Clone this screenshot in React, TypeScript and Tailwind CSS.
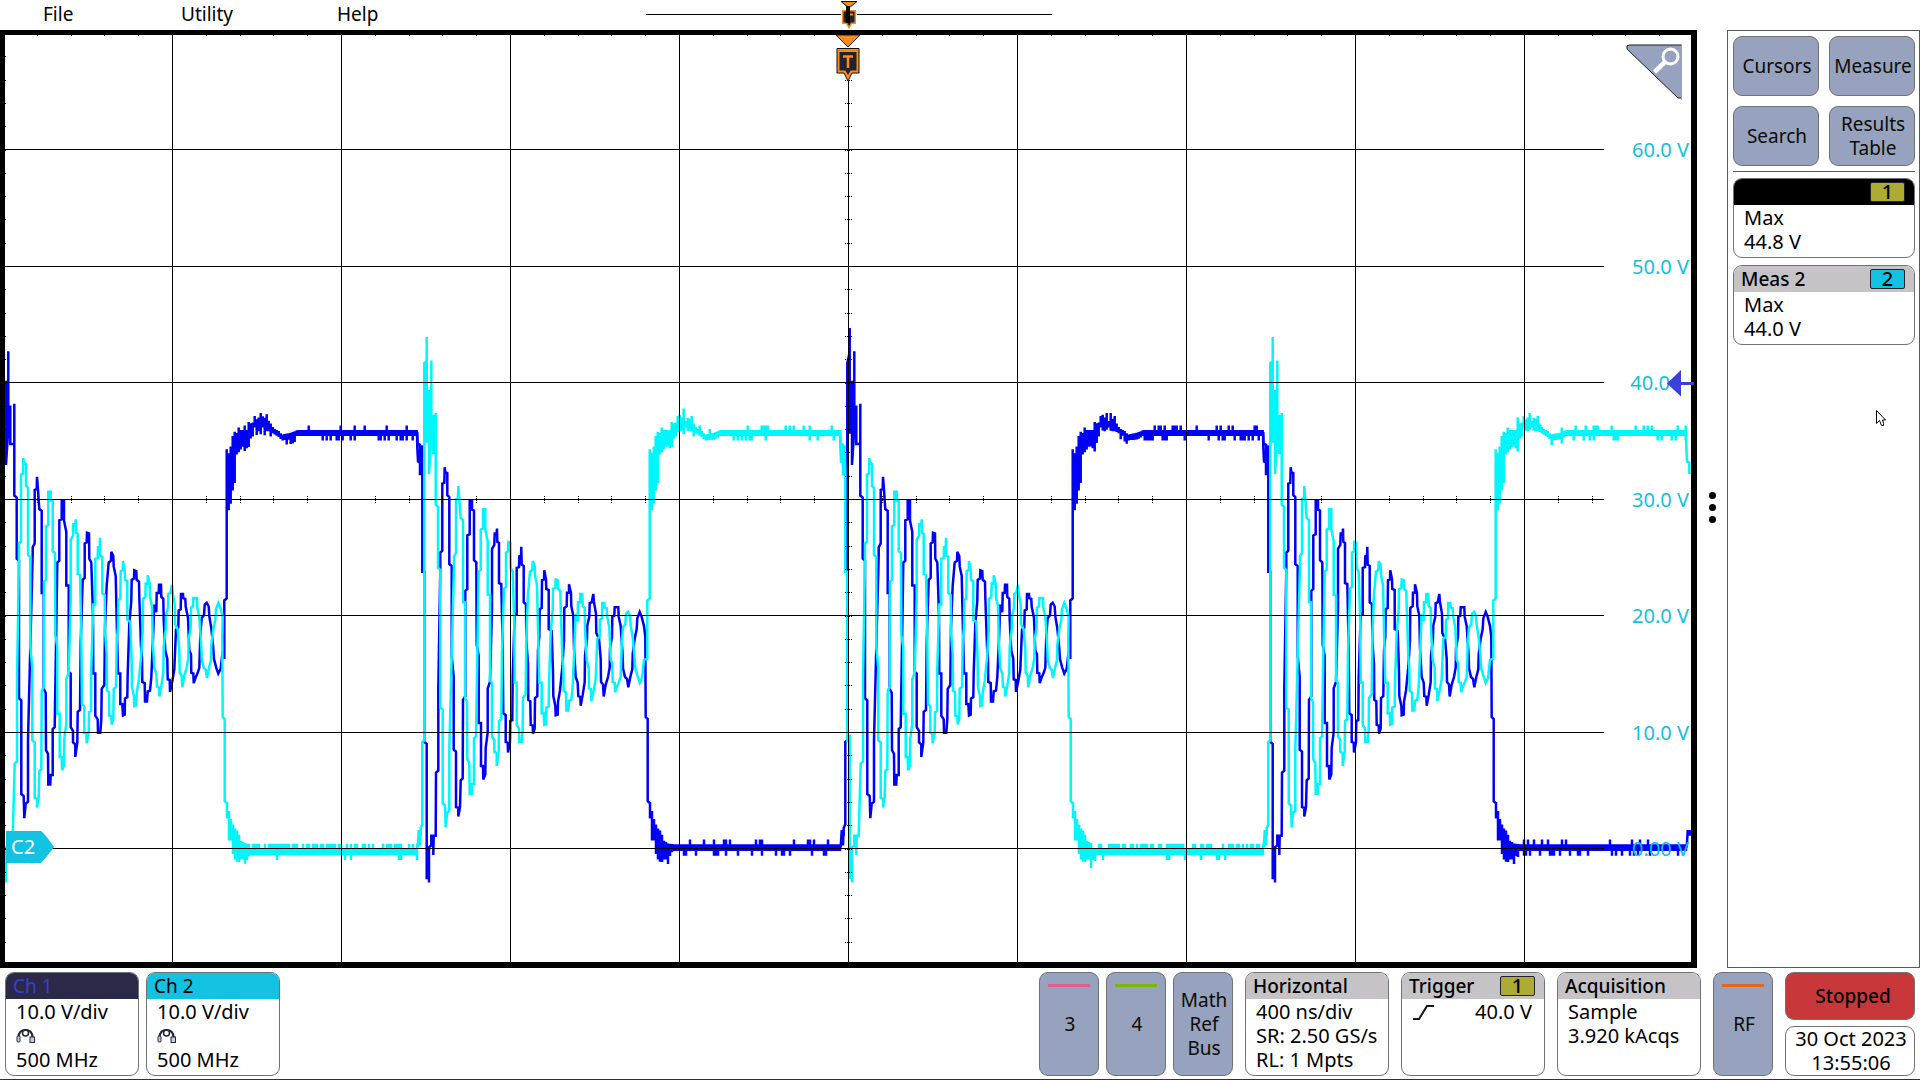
import React from "react";
import clsx from "clsx";

type Point = [number, number];

const HIGH_RING: Point[] = [
  [60, 1425], [62, 1380], [67, 1370], [67, 1155], [73, 1150], [73, 165], [80, 160], [80, 97], [80, 370], [87, 370],
  [87, 235], [87, 455], [94, 360], [94, 158], [94, 360], [100, 360], [100, 300], [100, 400], [107, 400], [107, 295],
  [107, 535], [114, 540], [114, 700], [121, 705], [121, 1065], [128, 1070], [128, 1315], [135, 1320], [137, 1378],
  [141, 1340], [148, 1335], [148, 1175], [155, 930], [162, 690], [162, 670], [168, 660], [168, 520], [174, 518],
  [175, 486], [178, 520], [182, 570], [189, 575], [189, 790], [195, 790], [195, 1040], [201, 1050], [202, 1200],
  [208, 1210], [209, 1290], [215, 1290], [216, 1265], [222, 1265], [222, 1145], [228, 1140], [232, 930], [236, 710],
  [242, 705], [242, 600], [249, 597], [249, 547], [256, 547], [256, 600], [263, 630], [263, 770], [270, 770],
  [270, 995], [276, 1000], [276, 1140], [283, 1150], [283, 1180], [290, 1185], [290, 1218], [296, 1180], [297, 1100],
  [304, 1095], [306, 920], [312, 755], [318, 750], [318, 660], [324, 657], [325, 632], [331, 634], [332, 700],
  [338, 710], [343, 850], [344, 1000], [350, 1000], [350, 1110], [357, 1120], [358, 1155], [365, 1155], [368, 1120],
  [369, 1040], [377, 1030], [379, 880], [384, 770], [390, 710], [397, 705], [398, 682], [404, 693], [405, 720],
  [411, 745], [414, 860], [418, 1000], [425, 1000], [425, 1080], [431, 1080], [433, 1110], [438, 1108], [439, 1065],
  [446, 1062], [447, 1000], [452, 870], [458, 810], [459, 755], [466, 752], [467, 730], [473, 732], [474, 755],
  [481, 760], [482, 800], [487, 930], [490, 960], [491, 1022], [498, 1025], [499, 1073], [505, 1073], [507, 1047],
  [514, 1045], [518, 1010], [523, 910], [527, 820], [533, 840], [534, 790], [540, 790], [541, 768], [547, 768],
  [548, 800], [554, 805], [555, 860], [560, 940], [566, 962], [567, 1015], [573, 1017], [574, 1048], [581, 1020],
  [587, 990], [592, 885], [599, 880], [600, 835], [606, 832], [607, 792], [613, 792], [614, 803], [620, 805],
  [621, 825], [628, 855], [632, 940], [637, 950], [638, 998], [644, 1000], [645, 1025], [651, 1010], [657, 998],
  [662, 985], [665, 900], [669, 855], [676, 848], [678, 820], [684, 815], [690, 825], [692, 850], [698, 882],
  [703, 925], [706, 962], [713, 985], [719, 1000], [726, 988], [732, 940], [742, 938], [742, 785], [749, 780],
  [749, 545],
];

// The other half: the low spike, then ringing in opposite phase.
const LOW_RING: Point[] = [
  [52, 345], [53, 375], [60, 378], [60, 455], [65, 455], [65, 380], [67, 455], [67, 710], [73, 710], [73, 1155],
  [80, 1160], [80, 1510], [87, 1510], [87, 1522], [87, 1430], [94, 1425], [94, 1400], [100, 1400], [100, 1450],
  [101, 1400], [107, 1400], [108, 1235], [115, 1230], [115, 1015], [121, 700], [121, 660], [127, 655], [127, 480],
  [133, 478], [134, 437], [136, 450], [142, 452], [142, 510], [148, 515], [148, 690], [155, 695], [155, 930],
  [161, 985], [161, 1175], [168, 1180], [168, 1325], [175, 1327], [175, 1350], [180, 1325], [182, 1255], [188, 1250],
  [189, 1045], [196, 1035], [196, 760], [202, 755], [202, 615], [209, 612], [209, 525], [216, 525], [216, 548],
  [222, 550], [222, 680], [229, 685], [230, 900], [236, 930], [236, 1105], [243, 1105], [243, 1218], [249, 1218],
  [250, 1253], [256, 1240], [257, 1170], [263, 1130], [263, 1015], [270, 998], [276, 805], [276, 650], [283, 640],
  [284, 610], [290, 610], [291, 597], [292, 632], [297, 635], [297, 740], [304, 742], [308, 910], [310, 1080],
  [317, 1085], [317, 1155], [323, 1157], [324, 1182], [330, 1155], [331, 1100], [337, 1098], [338, 985], [344, 820],
  [350, 820], [350, 700], [357, 698], [358, 670], [363, 668], [364, 645], [365, 692], [371, 695], [371, 790],
  [378, 795], [379, 890], [384, 950], [385, 1045], [391, 1048], [392, 1110], [398, 1112], [399, 1133], [404, 1120],
  [405, 1040], [412, 1035], [414, 915], [418, 880], [419, 808], [425, 805], [426, 732], [432, 730], [433, 706],
  [438, 730], [439, 755], [446, 758], [446, 860], [455, 865], [459, 972], [460, 1035], [466, 1060], [467, 1085],
  [473, 1083], [474, 1050], [480, 1020], [487, 960], [492, 890], [493, 805], [500, 800], [501, 765], [507, 765],
  [507, 743], [513, 765], [514, 800], [520, 825], [522, 910], [527, 985], [533, 1000], [535, 1035], [541, 1037],
  [542, 1060], [548, 1032], [554, 998], [555, 930], [561, 885], [562, 850], [568, 828], [569, 792], [575, 790],
  [580, 768], [582, 790], [588, 820], [589, 870], [597, 885], [602, 937], [603, 998], [609, 1005], [611, 1036],
  [617, 1005], [624, 985], [629, 960], [630, 910], [636, 880], [637, 828], [643, 825], [644, 803], [655, 803],
  [656, 828], [662, 852], [668, 930], [669, 962], [675, 985], [681, 990], [685, 1012], [691, 985], [697, 965],
  [698, 925], [704, 885], [710, 860], [712, 832], [719, 815], [725, 828], [732, 852], [736, 880], [737, 1090],
  [743, 1095], [743, 1310], [750, 1315], [750, 1350],
];

type Band = [number, number, number];

// x, upper edge, lower edge of the noisy plateaus
const HIGH_BAND: Band[] = [
  [749, 390, 545], [756, 402, 550], [763, 375, 525], [770, 340, 478], [777, 350, 478], [778, 352, 405],
  [783, 330, 400], [790, 340, 392], [800, 340, 380], [812, 340, 390], [817, 305, 380], [822, 326, 357],
  [829, 318, 357], [833, 303, 333], [842, 316, 345], [850, 292, 340], [857, 316, 333], [864, 306, 343],
  [878, 318, 343], [890, 336, 350], [905, 342, 358], [915, 352, 367], [945, 346, 364], [960, 340, 355],
  [1320, 340, 355],
];
const LOW_BAND: Band[] = [
  [750, 1312, 1355], [756, 1335, 1412], [763, 1360, 1412], [770, 1375, 1462], [777, 1386, 1462],
  [783, 1386, 1474], [790, 1412, 1462], [804, 1420, 1462], [818, 1422, 1440], [1322, 1422, 1440],
];

const PERIOD = 846;
const px = (x: number, origin: number) => origin + x / 3;
const py = (y: number) => 265 + y / 2.613;

function random(seed: number) {
  let s = seed;
  return () => {
    s = (s * 16807) % 2147483647;
    return s / 2147483647;
  };
}

function line(points: Point[], origin: number) {
  return "M" + points.map(([x, y]) => `${px(x, origin).toFixed(1)} ${py(y).toFixed(1)}`).join("L");
}

// Every second half cycle rings slightly later and a little higher
function late(points: Point[]): Point[] {
  return points.map(([x, y]) => (x >= 80 && x <= 733 && y < 1400 ? [x + (x > 105 ? 5 : 0), y - 24] : [x, y]));
}

function band(keys: Band[], origin: number, seed: number, up: number, down: number, shift = 0) {
  const rnd = random(seed);
  const last = keys[keys.length - 1][0];
  let d = "";
  let k = 0;
  for (let x = keys[0][0]; x <= last; x += 6) {
    while (k < keys.length - 2 && keys[k + 1][0] <= x) k++;
    const [x0, a0, b0] = keys[k];
    const [x1, a1, b1] = keys[k + 1];
    const f = (x - x0) / (x1 - x0);
    let top = a0 + (a1 - a0) * f;
    let bottom = b0 + (b1 - b0) * f;
    if (x > 800) {
      if (rnd() < up) top -= 12;
      if (rnd() < down) bottom += 12;
      top += shift;
      bottom += shift;
    }
    d += `M${px(x, origin).toFixed(1)} ${py(top).toFixed(1)}V${py(bottom).toFixed(1)}`;
  }
  return d;
}

function highHalf(origin: number, seed: number, shifted: boolean) {
  return (
    line(shifted ? late(HIGH_RING) : HIGH_RING, origin) +
    band(HIGH_BAND, origin, seed, 0.16, 0.26) +
    line([[1320, 345], [1321, 385], [1323, 422], [1330, 425], [1330, 455]], origin)
  );
}

function lowHalf(origin: number, seed: number, shifted: boolean) {
  return (
    line(shifted ? late(LOW_RING) : LOW_RING, origin) +
    (shifted ? band(LOW_BAND, origin, seed, 0.6, 0.1, 11) : band(LOW_BAND, origin, seed, 0.16, 0.28)) +
    line([[1322, 1430], [1325, 1388], [1331, 1388], [1331, 1400]], origin)
  );
}

// Origins are the left end of each half cycle inside the graticule
const CH1_PATH =
  highHalf(395 + 423 - PERIOD, 1187, true) +
  lowHalf(395, 23911, false) +
  highHalf(395 + 423, 37501, true) +
  lowHalf(395 + PERIOD, 41077, false);
const CH2_PATH =
  lowHalf(395 - 423, 53219, true) +
  highHalf(395, 67033, false) +
  lowHalf(395 + 423, 71881, true) +
  highHalf(395 + PERIOD, 83701, false);

const GRID_X = [167, 336, 505, 674, 843, 1012, 1181, 1350, 1519];
const GRID_Y = [114, 231, 347, 464, 580, 697, 813];
const LABELS = ["60.0 V", "50.0 V", "40.0", "30.0 V", "20.0 V", "10.0 V", "0.00 V"];
const TICKS_X = Array.from({ length: 50 }, (_, i) => Math.round(-2 + i * 33.8)).filter((x) => x > 2);
const TICKS_Y = Array.from({ length: 40 }, (_, i) => Math.round(-2 + i * 23.3)).filter((y) => y > 2);

function Graticule() {
  return (
    <g stroke="#000" strokeWidth="1" shapeRendering="crispEdges">
      {GRID_X.map((x) => (
        <path key={x} d={`M${x + 0.5} ${x === 843 ? 46 : 0}V927`} />
      ))}
      {GRID_Y.map((y) => (
        <path key={y} d={`M0 ${y + 0.5}H1599`} />
      ))}
      {TICKS_X.map((x) => (
        <React.Fragment key={x}>
          <path d={`M${x + 0.5} 0v1`} />
          {x < 1599 && <path d={`M${x + 0.5} 461v7`} strokeDasharray="1 1" />}
        </React.Fragment>
      ))}
      {TICKS_Y.map((y) => (
        <React.Fragment key={y}>
          <path d={`M0 ${y + 0.5}h1`} />
          <path d={`M840 ${y + 0.5}h7`} strokeDasharray="1 1" />
        </React.Fragment>
      ))}
    </g>
  );
}

function Plot() {
  return (
    <section className="relative min-w-0 border-[6px] border-l-[5px] border-t-[5px] border-black bg-white">
      <svg viewBox="0 0 1686 927" preserveAspectRatio="none" className="absolute inset-0 h-full w-full">
        <path d={CH1_PATH} fill="none" stroke="#0000fa" strokeWidth="2.5" />
        <path d={CH2_PATH} fill="none" stroke="#00f6fa" strokeWidth="2.5" />
        <Graticule />
      </svg>
      {LABELS.map((label, i) => (
        <span
          key={label}
          className={clsx(
            "absolute -translate-y-1/2 text-xl leading-6 text-[#12c0de]",
            label === "40.0" ? "right-[21px]" : "right-[2px]"
          )}
          style={{ top: `${((GRID_Y[i] + 1) / 927) * 100}%` }}
        >
          {label}
        </span>
      ))}

      <svg width="26" height="48" viewBox="0 0 26 48" className="absolute left-1/2 top-0 -translate-x-1/2">
        <path d="M1 0H25L13 12Z" fill="#f68b1f" stroke="#222" strokeWidth="1" />
        <path d="M2 13.500H24V38H17L13 46L9 38H2Z" fill="#f68b1f" stroke="#111" strokeWidth="1" />
        <path d="M4.500 17H21.500V35.500H15.500L13 40L10.500 35.500H4.500Z" fill="#23222c" />
        <path d="M8 21.500H18M13 21.500V33" stroke="#f68b1f" strokeWidth="2.500" />
      </svg>

      <button aria-label="Zoom" className="absolute right-[9px] top-[9px]">
        <svg width="56" height="56" viewBox="0 0 56 56">
          <path d="M3 1H55.500V54H52L1 5Q0 1 3 1Z" fill="#96a2be" stroke="#1b1b26" strokeWidth="1" />
          <path d="M55.500 0V56" stroke="#96a2be" strokeWidth="1" />
          <circle cx="44.500" cy="12.500" r="7.500" fill="none" stroke="#fff" strokeWidth="3" />
          <path d="M39 18L28.500 28" stroke="#fff" strokeWidth="4.500" />
        </svg>
      </button>

      <svg width="27" height="27" viewBox="0 0 27 27" className="absolute -right-[3px] top-[36.100%]">
        <path d="M0 13.500L14 0V26.500ZM13 12H27V15H13Z" fill="#3b40d8" />
      </svg>

      <div className="absolute left-px top-[85.900%] h-8 w-12">
        <svg width="48" height="32" viewBox="0 0 48 32" className="absolute inset-0">
          <path d="M0 0H35Q39 3 48 16Q39 28 35 32H0Z" fill="#12c2e0" />
        </svg>
        <span className="relative pl-[5px] text-xl leading-8 text-white">C2</span>
      </div>
    </section>
  );
}

function Card({ title, tone, badge, badgeTone, className, children }: {
  title?: string;
  tone?: string;
  badge?: string;
  badgeTone?: string;
  className?: string;
  children: React.ReactNode;
}) {
  return (
    <button
      className={clsx(
        "flex flex-col overflow-hidden rounded-[9px] border border-[#6f7373] bg-white text-left text-xl leading-6",
        className
      )}
    >
      <span className={clsx("flex h-[26px] w-full items-center justify-between pl-[7px] pr-[9px] text-[19px]", tone ?? "bg-[#c6c3c6] font-medium")}>
        <span>{title}</span>
        {badge && (
          <span className={clsx("flex h-5 w-[35px] items-center justify-center rounded-[2px] border border-[#22222c] text-xl font-medium text-black", badgeTone)}>
            {badge}
          </span>
        )}
      </span>
      <span className="flex w-full flex-col whitespace-nowrap pl-2.5 pr-3 pt-px">{children}</span>
    </button>
  );
}

function SoftButton({ bar, className, children }: { bar?: string; className?: string; children: React.ReactNode }) {
  return (
    <button
      className={clsx(
        "relative flex items-center justify-center rounded-[9px] border border-[#6f7373] bg-[#96a2be] pl-0.5 text-center text-[19px] leading-6 text-[#0c0c06]",
        className
      )}
    >
      {bar && <span className={clsx("absolute inset-x-2 top-[11px] h-[3px]", bar)} />}
      <span>{children}</span>
    </button>
  );
}

function ProbeIcon() {
  return (
    <svg width="20" height="24" viewBox="0 0 20 24" fill="none" stroke="#23273a">
      <path d="M2.500 13Q3 6 9.500 6Q16 6 16.500 13" strokeWidth="2.200" />
      <circle cx="9.500" cy="9" r="3" strokeWidth="1.500" />
      <rect x="1" y="12" width="3" height="6" rx="1" fill="#c9cede" />
      <rect x="14" y="13" width="4.500" height="5.500" fill="#c9cede" />
    </svg>
  );
}

function MenuBar() {
  return (
    <header className="flex h-[30px] items-center">
      <div className="relative flex h-full min-w-0 flex-1 items-center">
        <nav className="flex text-[19px] leading-6">
          <button className="w-[139px] pb-0.5 pl-[43px] text-left">File</button>
          <button className="w-[155px] pb-0.5 pl-[42px] text-left">Utility</button>
          <button className="w-[136px] pb-0.5 pl-[43px] text-left">Help</button>
        </nav>
        <svg width="406" height="30" viewBox="0 0 406 30" className="absolute left-1/2 top-0 -translate-x-1/2">
          <path d="M0 14.500H195M211 14.500H406" stroke="#000" shapeRendering="crispEdges" />
          <path d="M195 1.500H211L203 8Z" fill="#f68b1f" stroke="#111" />
          <path d="M196 10H210V24H206L203 29L200 24H196Z" fill="#f68b1f" />
          <path d="M197.500 11.500H208.500V22.500H205L203 26L201 22.500H197.500Z" fill="#23222c" />
          <path d="M203 14.500H207" stroke="#f68b1f" strokeWidth="2" />
          <path d="M202 6V23" stroke="#000" strokeWidth="4" />
        </svg>
      </div>
      <div className="w-[223px]" />
    </header>
  );
}

function Sidebar() {
  return (
    <aside className="relative flex w-[193px] flex-col border border-[#555a5c] pl-[5px] pr-1 pt-[5px]">
      <div className="grid grid-cols-2 gap-2.5">
        <SoftButton className="h-[60px]">Cursors</SoftButton>
        <SoftButton className="h-[60px]">Measure</SoftButton>
        <SoftButton className="h-[60px]">Search</SoftButton>
        <SoftButton className="h-[60px]">Results<br />Table</SoftButton>
      </div>
      <hr className="mb-1.5 mt-[5px] border-[#555a5c]" />
      <Card title="" tone="bg-black" badge="1" badgeTone="bg-[#adab31]" className="mb-[7px] h-20">
        <span>Max</span>
        <span>44.8 V</span>
      </Card>
      <Card title="Meas 2" badge="2" badgeTone="bg-[#12c2e0]" className="h-20">
        <span>Max</span>
        <span>44.0 V</span>
      </Card>
      <svg width="12" height="18" viewBox="0 0 12 18" className="absolute left-[148px] top-[379px]">
        <path d="M0.500 0.500V13.500L3.500 10.500L5.500 15.500H7.500V13.500L6.500 10H9.500Z" fill="#fff" stroke="#000" />
      </svg>
    </aside>
  );
}

function StatusBar() {
  return (
    <footer className="flex h-28 border-b border-[#2d3240] pb-[3px] pl-[5px] pr-[5px] pt-1">
      <div className="flex gap-[7px]">
        <Card title="Ch 1" tone="bg-[#2a2a48] text-[#3a3fd4]" className="w-[134px]">
          <span>10.0 V/div</span>
          <ProbeIcon />
          <span>500 MHz</span>
        </Card>
        <Card title="Ch 2" tone="bg-[#12c2e0]" className="w-[134px]">
          <span>10.0 V/div</span>
          <ProbeIcon />
          <span>500 MHz</span>
        </Card>
      </div>
      <div className="ml-auto flex gap-3">
        <div className="flex gap-[7px]">
          <SoftButton bar="bg-[#dc5f8e]" className="w-[60px]">3</SoftButton>
          <SoftButton bar="bg-[#7fb400]" className="w-[60px]">4</SoftButton>
          <SoftButton className="w-[60px]">Math<br />Ref<br />Bus</SoftButton>
        </div>
        <Card title="Horizontal" className="w-36">
          <span>400 ns/div</span>
          <span>SR: 2.50 GS/s</span>
          <span>RL: 1 Mpts</span>
        </Card>
        <Card title="Trigger" badge="1" badgeTone="bg-[#adab31]" className="w-36">
          <span className="flex justify-between">
            <svg width="24" height="24" viewBox="0 0 24 24" fill="none" stroke="#111522" strokeWidth="2">
              <path d="M1 19H7L15 6H22" />
            </svg>
            40.0 V
          </span>
        </Card>
        <Card title="Acquisition" className="w-36">
          <span>Sample</span>
          <span>3.920 kAcqs</span>
        </Card>
        <SoftButton bar="bg-[#e0681f]" className="w-[60px]">RF</SoftButton>
        <div className="flex w-[130px] flex-col gap-1.5">
          <button className="flex-1 rounded-[9px] border border-[#6f7373] bg-[#c8373a] pl-1.5 text-[19px] font-medium">
            Stopped
          </button>
          <div className="flex flex-1 flex-col items-center justify-center whitespace-nowrap rounded-[9px] border border-[#6f7373] pl-0.5 text-xl leading-6">
            <span>30 Oct 2023</span>
            <span>13:55:06</span>
          </div>
        </div>
      </div>
    </footer>
  );
}

export default function App() {
  return (
    <div className="flex h-screen flex-col overflow-hidden bg-white font-['Noto_Sans',sans-serif] text-black">
      <MenuBar />
      <main className="flex min-h-0 flex-1">
        <div className="grid min-w-0 flex-1">
          <Plot />
        </div>
        <button aria-label="Toggle results bar" className="flex w-[30px] flex-col items-center justify-center gap-[5px] pt-4">
          <span className="size-[7px] rounded-full bg-black" />
          <span className="size-[7px] rounded-full bg-black" />
          <span className="size-[7px] rounded-full bg-black" />
        </button>
        <Sidebar />
      </main>
      <StatusBar />
    </div>
  );
}
